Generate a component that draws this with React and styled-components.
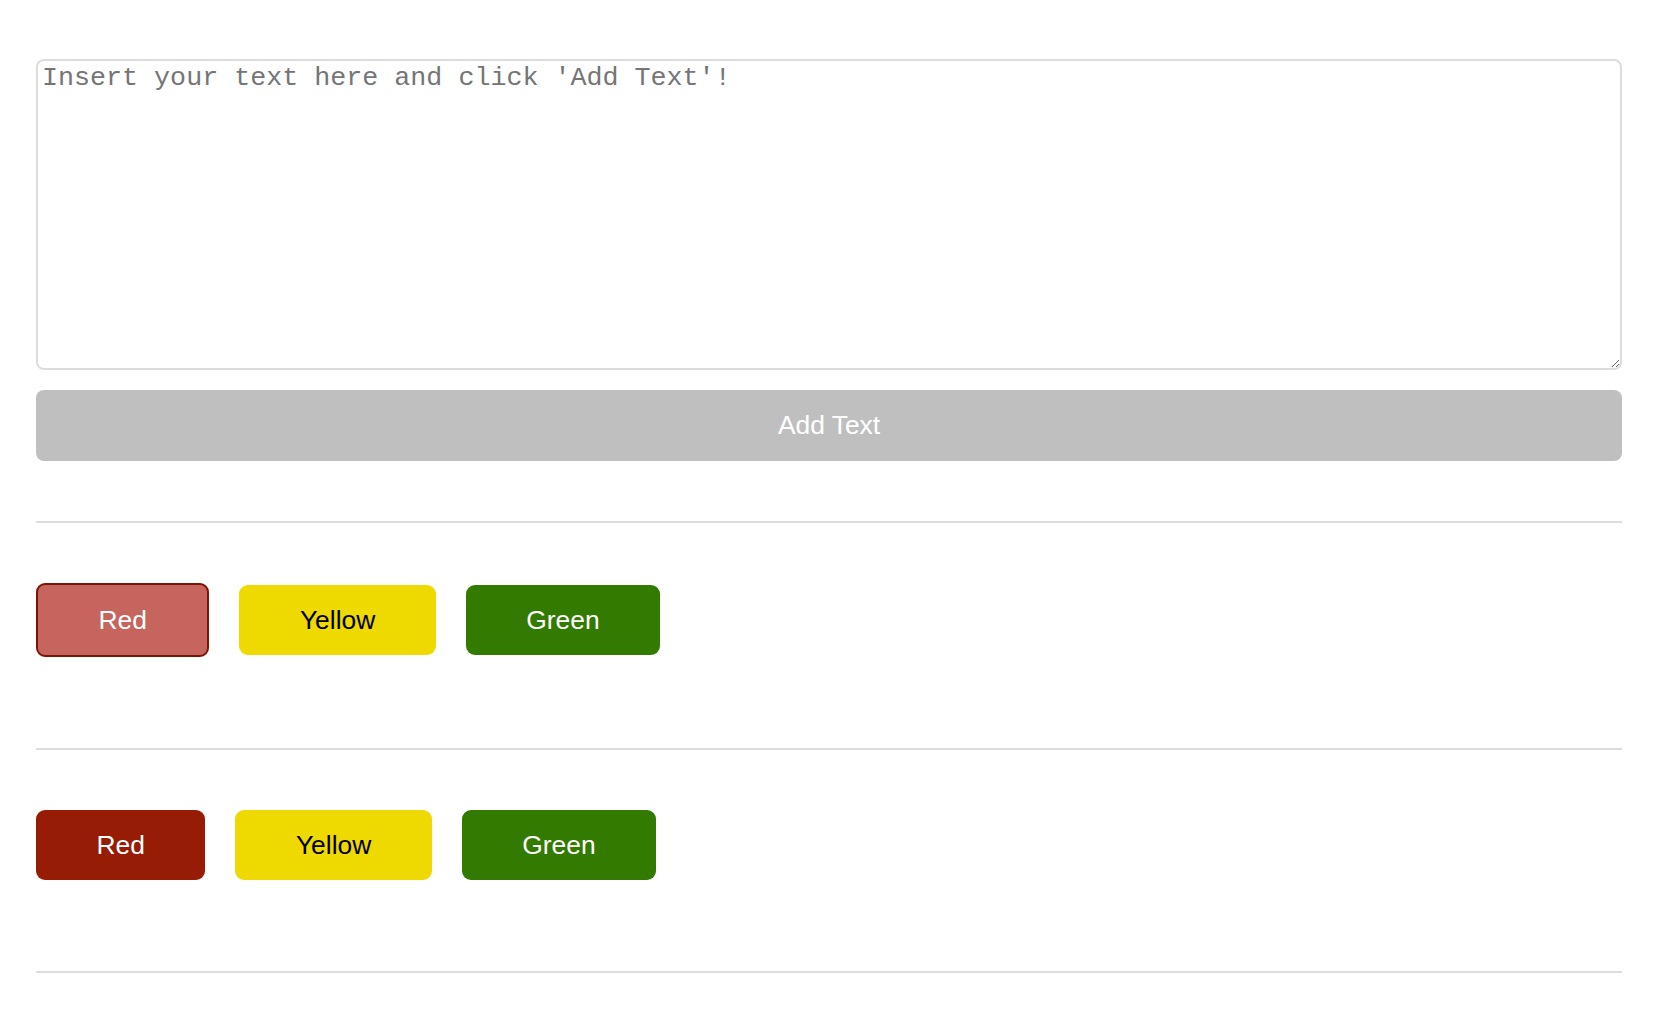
import React, { useState } from "react";
import styled, { createGlobalStyle } from "styled-components";

const GlobalStyle = createGlobalStyle`
  html, body { margin: 0; padding: 0; background: #ffffff; }
  body { font-family: "Liberation Sans", Arial, sans-serif; }
  * { box-sizing: border-box; }
`;

const Page = styled.div`
  width: 1586px;
  margin-left: 36px;
  padding-top: 59px;
  display: flex;
  flex-direction: column;
`;

const TextArea = styled.textarea`
  display: block;
  width: 100%;
  height: 311px;
  border: 2px solid #dddddd;
  border-radius: 8px;
  padding: 2px 4px;
  font-family: "Liberation Mono", "Courier New", monospace;
  font-size: 26.7px;
  color: #333;
  outline: none;
  &::placeholder { color: #757575; }
`;

const AddButton = styled.button`
  margin-top: 20px;
  height: 71px;
  width: 100%;
  border: none;
  border-radius: 8px;
  background: #bfbfbf;
  color: #ffffff;
  font-family: "Liberation Sans", Arial, sans-serif;
  font-size: 26.4px;
  cursor: pointer;
`;

const Divider = styled.hr`
  margin: 0;
  border: none;
  height: 2px;
  background: #dddddd;
  margin-top: ${(p) => p.$top || 0}px;
`;

const Section = styled.div`
  padding: 60px 0 91px;
  display: flex;
  align-items: center;
  gap: 30px;
`;

const palette = {
  red: { bg: "#971c05", fg: "#ffffff", light: "#c6645e", border: "#7a1508" },
  yellow: { bg: "#eed900", fg: "#000000", light: "#eed900", border: "#b8a800" },
  green: { bg: "#327a00", fg: "#ffffff", light: "#327a00", border: "#225200" },
};

const ColorButton = styled.button`
  height: ${(p) => (p.$active ? 74 : 70)}px;
  padding: 0 60.5px;
  border: ${(p) => (p.$active ? `2px solid ${palette[p.$color].border}` : "none")};
  border-radius: 9px;
  background: ${(p) => (p.$active ? palette[p.$color].light : palette[p.$color].bg)};
  color: ${(p) => palette[p.$color].fg};
  font-family: "Liberation Sans", Arial, sans-serif;
  font-size: 26.4px;
  cursor: pointer;
`;

const buttons = [
  { key: "red", label: "Red" },
  { key: "yellow", label: "Yellow" },
  { key: "green", label: "Green" },
];

export default function App() {
  const [text, setText] = useState("");
  return (
    <>
      <GlobalStyle />
      <Page>
        <TextArea
          placeholder="Insert your text here and click 'Add Text'!"
          value={text}
          onChange={(e) => setText(e.target.value)}
        />
        <AddButton>Add Text</AddButton>
        <Divider $top={60} />
        <Section>
          {buttons.map((b) => (
            <ColorButton key={b.key} $color={b.key} $active={b.key === "red"}>
              {b.label}
            </ColorButton>
          ))}
        </Section>
        <Divider />
        <Section>
          {buttons.map((b) => (
            <ColorButton key={b.key} $color={b.key}>
              {b.label}
            </ColorButton>
          ))}
        </Section>
        <Divider />
      </Page>
    </>
  );
}
